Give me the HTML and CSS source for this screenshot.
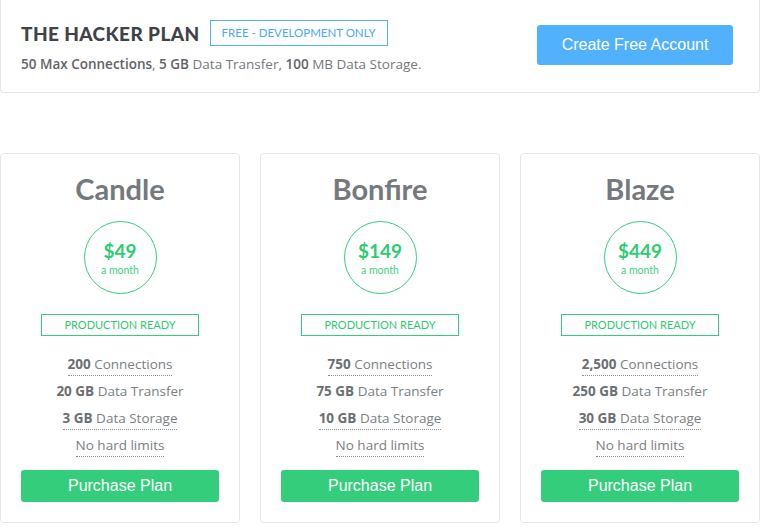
FILE: index.html
```html
<!DOCTYPE html>
<html>
<head>
<meta charset="utf-8">
<link rel="stylesheet" href="styles.css">
</head>
<body>
<div class="page">
  <section class="hacker">
    <div class="hacker-info">
      <div class="hacker-head">
        <h1 class="hacker-title">THE HACKER PLAN</h1>
        <span class="badge-blue">FREE - DEVELOPMENT ONLY</span>
      </div>
      <p class="hacker-sub"><b>50 Max Connections</b>, <b>5 GB</b> Data Transfer, <b>100</b> MB Data Storage.</p>
    </div>
    <a class="btn-blue">Create Free Account</a>
  </section>

  <div class="plans">
    <div class="card">
      <h2 class="card-title">Candle</h2>
      <div class="price"><span class="amount">$49</span><span class="per">a month</span></div>
      <div class="badge-green">PRODUCTION READY</div>
      <ul class="features">
        <li><span class="dot"><b>200</b> Connections</span></li>
        <li><span><b>20 GB</b> Data Transfer</span></li>
        <li><span class="dot"><b>3 GB</b> Data Storage</span></li>
        <li><span class="dot">No hard limits</span></li>
      </ul>
      <a class="btn-green">Purchase Plan</a>
    </div>
    <div class="card">
      <h2 class="card-title">Bonfire</h2>
      <div class="price"><span class="amount">$149</span><span class="per">a month</span></div>
      <div class="badge-green">PRODUCTION READY</div>
      <ul class="features">
        <li><span class="dot"><b>750</b> Connections</span></li>
        <li><span><b>75 GB</b> Data Transfer</span></li>
        <li><span class="dot"><b>10 GB</b> Data Storage</span></li>
        <li><span class="dot">No hard limits</span></li>
      </ul>
      <a class="btn-green">Purchase Plan</a>
    </div>
    <div class="card">
      <h2 class="card-title">Blaze</h2>
      <div class="price"><span class="amount">$449</span><span class="per">a month</span></div>
      <div class="badge-green">PRODUCTION READY</div>
      <ul class="features">
        <li><span class="dot"><b>2,500</b> Connections</span></li>
        <li><span><b>250 GB</b> Data Transfer</span></li>
        <li><span class="dot"><b>30 GB</b> Data Storage</span></li>
        <li><span class="dot">No hard limits</span></li>
      </ul>
      <a class="btn-green">Purchase Plan</a>
    </div>
  </div>
</div>
</body>
</html>
```

FILE: styles.css
```css
* { box-sizing: border-box; }
html, body { margin: 0; padding: 0; background: #fff; }
body { font-family: "Lato", "Open Sans", sans-serif; color: #74797e; }
.page { width: 760px; }

.hacker {
  height: 93px;
  border: 1px solid #e6e6e6;
  border-top: none;
  border-radius: 0 0 4px 4px;
  display: flex;
  align-items: flex-start;
  justify-content: space-between;
  padding: 20px 26px 0 20px;
}
.hacker-head { display: flex; align-items: center; gap: 10px; }
.hacker-title {
  margin: 0;
  font-size: 19px;
  font-weight: 900;
  color: #3f4347;
  letter-spacing: 0.4px;
}
.badge-blue {
  border: 1px solid #52b1fd;
  color: #4aa9f6;
  font-size: 11.5px;
  height: 26px;
  line-height: 24px;
  padding: 0 11px;
}
.hacker-sub {
  margin: 9px 0 0;
  font-family: "Open Sans", sans-serif;
  font-size: 13.5px;
  color: #74797e;
}
.hacker-sub b { font-weight: 600; color: #5f6468; }
.btn-blue {
  margin-top: 5px;
  width: 196px;
  height: 40px;
  line-height: 40px;
  text-align: center;
  background: #52b1fd;
  color: #fff;
  border-radius: 3px;
  font-family: "Liberation Sans", Arial, sans-serif;
  font-size: 16px;
}

.plans {
  margin-top: 60px;
  display: grid;
  grid-template-columns: 240px 240px 240px;
  column-gap: 20px;
}
.card {
  border: 1px solid #e6e6e6;
  border-radius: 4px;
  height: 370px;
  display: flex;
  flex-direction: column;
  align-items: center;
  padding: 18px 20px 0;
}
.card-title {
  margin: 0;
  font-size: 29px;
  font-weight: 700;
  color: #74797e;
  line-height: 34px;
}
.price {
  margin-top: 15px;
  width: 73px;
  height: 73px;
  border: 1px solid #34cd7c;
  border-radius: 50%;
  display: flex;
  flex-direction: column;
  align-items: center;
  justify-content: center;
  color: #2ecc71;
}
.amount { font-size: 19px; font-weight: 700; line-height: 20px; margin-top: 2px; }
.per { font-size: 10.5px; line-height: 14px; margin-top: 2px; color: #3fcf80; }
.badge-green {
  margin-top: 20px;
  width: 158px;
  height: 22px;
  line-height: 20px;
  border: 1px solid #34cd7c;
  color: #2ecc71;
  font-size: 11px;
  text-align: center;
}
.features {
  list-style: none;
  margin: 18px 0 0;
  padding: 0;
  font-family: "Open Sans", sans-serif;
  font-size: 13.5px;
  color: #7a7f84;
  text-align: center;
}
.features li { height: 27px; line-height: 20px; }
.features b { font-weight: 700; color: #6a6f73; }
.features .dot { border-bottom: 1px dotted #8a8f93; padding-bottom: 2px; }
.btn-green {
  margin-top: 8px;
  width: 198px;
  height: 32px;
  line-height: 32px;
  text-align: center;
  background: #34cd7c;
  color: #fff;
  border-radius: 3px;
  font-family: "Liberation Sans", Arial, sans-serif;
  font-size: 16px;
}
```
